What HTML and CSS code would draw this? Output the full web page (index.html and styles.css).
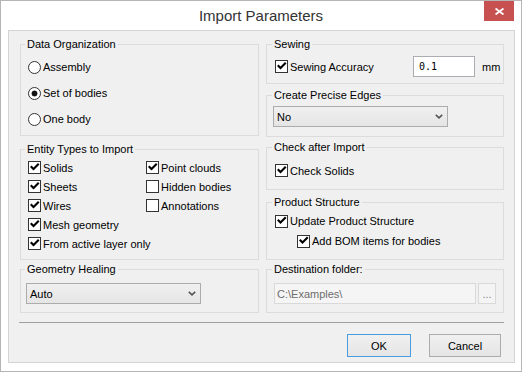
FILE: index.html
```html
<!DOCTYPE html>
<html lang="en">
<head>
    <meta charset="UTF-8">
    <title>Import Parameters</title>
    <link rel="stylesheet" href="styles.css">
</head>
<body>
    <div class="window">
        <div class="titlebar">
            <span></span>
            <div class="title">Import Parameters</div>
            <button class="close" type="button">
                <svg width="9" height="7" viewBox="0 0 9 7"><path d="M0.5 0.5 L8.5 6.5 M8.5 0.5 L0.5 6.5" stroke="#fff" stroke-width="1.8" fill="none"/></svg>
            </button>
        </div>

        <div class="client">
            <div class="columns">
                <!-- Left column -->
                <div class="col col-left">
                    <fieldset class="group g-org">
                        <legend>Data Organization</legend>
                        <label class="opt"><input type="radio" name="org" class="rb"> Assembly</label>
                        <label class="opt"><input type="radio" name="org" class="rb" checked> Set of bodies</label>
                        <label class="opt"><input type="radio" name="org" class="rb"> One body</label>
                    </fieldset>

                    <fieldset class="group g-entity">
                        <legend>Entity Types to Import</legend>
                        <div class="entity-grid">
                            <label class="check"><input type="checkbox" class="cb" checked>Solids</label>
                            <label class="check"><input type="checkbox" class="cb" checked>Point clouds</label>
                            <label class="check"><input type="checkbox" class="cb" checked>Sheets</label>
                            <label class="check"><input type="checkbox" class="cb">Hidden bodies</label>
                            <label class="check"><input type="checkbox" class="cb" checked>Wires</label>
                            <label class="check"><input type="checkbox" class="cb">Annotations</label>
                            <label class="check wide"><input type="checkbox" class="cb" checked>Mesh geometry</label>
                            <label class="check wide"><input type="checkbox" class="cb" checked>From active layer only</label>
                        </div>
                    </fieldset>

                    <fieldset class="group g-heal">
                        <legend>Geometry Healing</legend>
                        <div class="combo">
                            <span>Auto</span>
                            <svg width="8" height="5" viewBox="0 0 8 5"><path d="M0.8 0.8 L4 3.8 L7.2 0.8" stroke="#555" stroke-width="1.6" fill="none"/></svg>
                        </div>
                    </fieldset>
                </div>

                <!-- Right column -->
                <div class="col col-right">
                    <fieldset class="group g-sew">
                        <legend>Sewing</legend>
                        <div class="sew-row">
                            <label class="check sew-label"><input type="checkbox" class="cb" checked>Sewing Accuracy</label>
                            <input type="text" class="field num" value="0.1">
                            <span class="unit">mm</span>
                        </div>
                    </fieldset>

                    <fieldset class="group g-edges">
                        <legend>Create Precise Edges</legend>
                        <div class="combo">
                            <span>No</span>
                            <svg width="8" height="5" viewBox="0 0 8 5"><path d="M0.8 0.8 L4 3.8 L7.2 0.8" stroke="#555" stroke-width="1.6" fill="none"/></svg>
                        </div>
                    </fieldset>

                    <fieldset class="group g-check">
                        <legend>Check after Import</legend>
                        <label class="check row19"><input type="checkbox" class="cb" checked>Check Solids</label>
                    </fieldset>

                    <fieldset class="group g-product">
                        <legend>Product Structure</legend>
                        <label class="check row20"><input type="checkbox" class="cb" checked>Update Product Structure</label>
                        <label class="check row20 indent"><input type="checkbox" class="cb" checked>Add BOM items for bodies</label>
                    </fieldset>

                    <fieldset class="group g-dest">
                        <legend>Destination folder:</legend>
                        <div class="dest-row">
                            <input type="text" class="field path" value="C:\Examples\" disabled>
                            <button class="browse" type="button" disabled>...</button>
                        </div>
                    </fieldset>
                </div>
            </div>

            <div class="separator"></div>

            <div class="buttons">
                <button class="btn btn-ok" type="button">OK</button>
                <button class="btn btn-cancel" type="button">Cancel</button>
            </div>
        </div>
    </div>
</body>
</html>
```

FILE: styles.css
```css
body {
    margin: 0;
    font-family: "Liberation Sans", Arial, sans-serif;
    font-size: 11px;
    color: #000;
    background: #fff;
}

.window {
    width: 522px;
    height: 372px;
    box-sizing: border-box;
    border: 1px solid #b5b5b5;
    background: #fff;
    display: flex;
    flex-direction: column;
}

/* Title bar */
.titlebar {
    height: 29px;
    flex-shrink: 0;
    display: grid;
    grid-template-columns: 1fr auto 1fr;
    padding: 0 7px;
}

.title {
    font-size: 15px;
    line-height: 29px;
    color: #333;
}

.close {
    justify-self: end;
    align-self: start;
    width: 30px;
    height: 20px;
    padding: 0;
    border: none;
    background: #c75050;
    display: flex;
    align-items: center;
    justify-content: center;
}

/* Client area */
.client {
    flex: 1;
    margin: 0 6px 8px 7px;
    border: 1px solid #d4d4d4;
    background: #f0f0f0;
    padding-top: 7px;
    display: flex;
    flex-direction: column;
}

.columns {
    display: flex;
    gap: 7px;
    padding: 0 10px 0 11px;
}

.col {
    display: flex;
    flex-direction: column;
}

.col-left { width: 239px; }
.col-right { width: 238px; }

/* Group boxes */
.group {
    margin: 0;
    min-width: 0;
    box-sizing: border-box;
    border: 1px solid #dcdcdc;
    padding: 0 7px;
}

.col-right .group {
    padding-left: 8px;
}

.group legend {
    padding: 0 2px;
    margin-left: -3px;
    line-height: 13px;
}

.g-org     { height: 98px;  padding-top: 3px; }
.g-entity  { height: 117px; padding-top: 2px; margin-top: 7px; }
.g-heal    { height: 50px;  padding-top: 7px; margin-top: 3px; }

.g-sew     { height: 46px;  padding-top: 5px; }
.g-edges   { height: 48px;  padding-top: 4px; margin-top: 5px; }
.g-check   { height: 49px;  padding-top: 7px; margin-top: 4px; }
.g-product { height: 64px;  padding-top: 2px; margin-top: 6px; }
.g-dest    { height: 50px;  padding-top: 7px; margin-top: 3px; }

/* Radio buttons */
.opt {
    display: flex;
    align-items: center;
    gap: 2px;
    height: 26px;
}

.rb {
    appearance: none;
    width: 13px;
    height: 13px;
    margin: 0;
    flex-shrink: 0;
    border: 1px solid #333;
    border-radius: 50%;
    background: #fff;
}

.rb:checked {
    background: radial-gradient(circle, #111 0 2.6px, #fff 3.3px);
}

/* Check boxes */
.check {
    display: flex;
    align-items: center;
    gap: 2px;
    white-space: nowrap;
}

.cb {
    appearance: none;
    width: 13px;
    height: 13px;
    margin: 0;
    flex-shrink: 0;
    border: 1px solid #333;
    background: #fff;
}

.cb:checked::before {
    content: "";
    display: block;
    width: 11px;
    height: 11px;
    background: #000;
    clip-path: polygon(1px 5px, 2.5px 3.5px, 4.5px 5.5px, 9px 1px, 10.5px 2.5px, 4.5px 8.6px);
}

.entity-grid {
    display: grid;
    grid-template-columns: 118px auto;
    grid-auto-rows: 19px;
}

.entity-grid .wide {
    grid-column: 1 / -1;
}

.row19 { height: 19px; }
.row20 { height: 20px; }
.indent { margin-left: 22px; }

/* Combo boxes */
.combo {
    width: 175px;
    height: 21px;
    box-sizing: border-box;
    margin-left: -2px;
    padding: 0 4px 0 3px;
    border: 1px solid #acacac;
    background: linear-gradient(#f0f0f0, #e5e5e5);
    display: flex;
    align-items: center;
    justify-content: space-between;
}

/* Text fields */
.field {
    height: 21px;
    box-sizing: border-box;
    margin: 0;
    border: 1px solid #abadb3;
    background: #fff;
    font-family: "Liberation Sans", Arial, sans-serif;
    font-size: 11px;
    color: #000;
    outline: none;
}

.sew-row {
    display: flex;
    align-items: center;
    height: 21px;
}

.sew-label {
    width: 138px;
    flex-shrink: 0;
}

.num {
    width: 62px;
    flex-shrink: 0;
    padding: 0 5px;
    font-family: "DejaVu Sans Mono", "Liberation Mono", monospace;
    font-size: 10px;
}

.unit {
    margin-left: 7px;
    flex-shrink: 0;
}

.dest-row {
    display: flex;
    gap: 2px;
    margin-left: -1px;
}

.path {
    width: 203px;
    padding: 0 2px;
    border-color: #d9d9d9;
    background: #f5f5f5;
    color: #6d6d6d;
}

.browse {
    width: 18px;
    height: 21px;
    padding: 0 0 3px;
    border: 1px solid #d9d9d9;
    background: #f4f4f4;
    color: #838383;
    font-family: "Liberation Sans", Arial, sans-serif;
    font-size: 11px;
    line-height: 1;
    display: flex;
    align-items: flex-end;
    justify-content: center;
}

/* Bottom */
.separator {
    height: 1px;
    margin: 9px 10px 0;
    background: #a0a0a0;
}

.buttons {
    display: flex;
    justify-content: flex-end;
    gap: 18px;
    margin-top: 11px;
    padding-right: 13px;
}

.btn {
    height: 23px;
    padding: 0;
    border: 1px solid #acacac;
    background: linear-gradient(#f0f0f0, #e5e5e5);
    font-family: "Liberation Sans", Arial, sans-serif;
    font-size: 11px;
    color: #000;
}

.btn-ok {
    width: 64px;
    border-color: #4a9be0;
}

.btn-cancel {
    width: 72px;
}
```
